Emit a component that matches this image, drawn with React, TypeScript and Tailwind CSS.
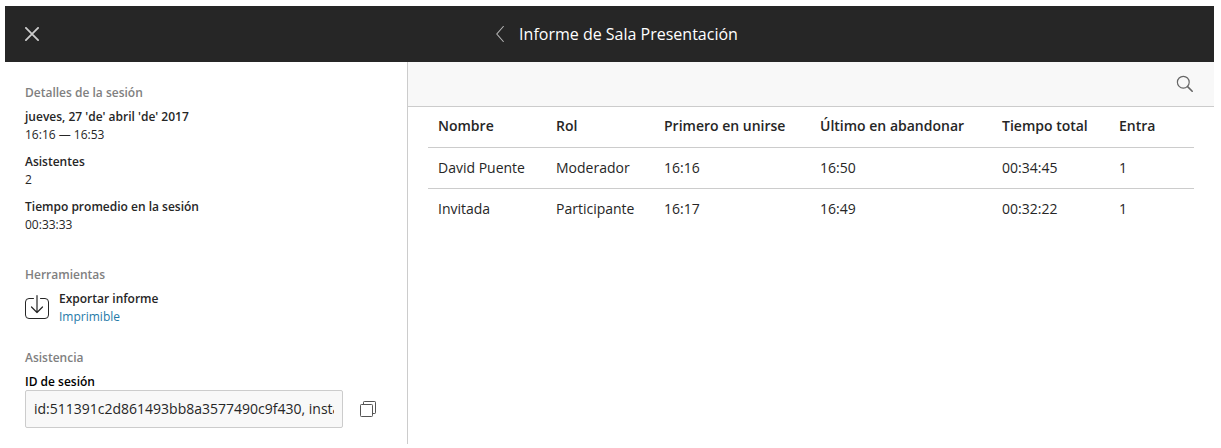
import type { ReactNode } from "react";

const details = [
  { label: "jueves, 27 'de' abril 'de' 2017", value: "16:16 — 16:53" },
  { label: "Asistentes", value: "2" },
  { label: "Tiempo promedio en la sesión", value: "00:33:33" },
];

const columns = [
  { title: "Nombre", width: "w-[118px]" },
  { title: "Rol", width: "w-[108px]" },
  { title: "Primero en unirse", width: "w-[156px]" },
  { title: "Último en abandonar", width: "w-[182px]" },
  { title: "Tiempo total", width: "w-[117px]" },
  { title: "Entra", width: "" },
];

const rows = [
  ["David Puente", "Moderador", "16:16", "16:50", "00:34:45", "1"],
  ["Invitada", "Participante", "16:17", "16:49", "00:32:22", "1"],
];

function Section({ title, children }: { title: string; children: ReactNode }) {
  return (
    <section>
      <h2 className="mb-1.5 font-semibold text-[#808080]">{title}</h2>
      {children}
    </section>
  );
}

function Header() {
  return (
    <header className="grid h-14 grid-cols-[1fr_auto_1fr] items-center bg-[#262626] px-5 text-white">
      <button type="button" aria-label="Cerrar" className="w-fit">
        <svg width="14" height="14" viewBox="0 0 14 14" fill="none" stroke="#cccccc" strokeWidth="1.8" strokeLinecap="round">
          <path d="M0.9 0.9 13.1 13.1M13.1 0.9 0.9 13.1" />
        </svg>
      </button>
      <div className="flex items-center gap-[15px] pl-[15px]">
        <button type="button" aria-label="Volver">
          <svg width="8" height="16" viewBox="0 0 8 16" fill="none" stroke="#b4b4b4" strokeWidth="1.1" strokeLinecap="round">
            <path d="M7.3 0.5 0.8 8l6.5 7.5" />
          </svg>
        </button>
        <h1 className="text-base">Informe de Sala Presentación</h1>
      </div>
    </header>
  );
}

function Sidebar() {
  return (
    <aside className="flex w-[403px] shrink-0 flex-col gap-[23px] border-r border-[#cccccc] px-5 pt-[22px] pb-4 text-xs leading-[18px]">
      <Section title="Detalles de la sesión">
        <dl>
          {details.map((item) => (
            <div key={item.label} className="mb-[9px]">
              <dt className="font-semibold">{item.label}</dt>
              <dd>{item.value}</dd>
            </div>
          ))}
        </dl>
      </Section>
      <Section title="Herramientas">
        <div className="flex items-center gap-2.5">
          <svg width="24" height="26" viewBox="0 0 24 26" fill="none" stroke="#262626" strokeLinecap="round" strokeLinejoin="round">
            <path d="M8.5 3.5H4A3.5 3.5 0 0 0 .5 7v13A3.5 3.5 0 0 0 4 23.5h16a3.5 3.5 0 0 0 3.5-3.5V7A3.5 3.5 0 0 0 20 3.500h-4.5" />
            <path d="M12 .6v17M6.500 12l5.500 5.500 5.500-5.500" strokeWidth="1.2" />
          </svg>
          <div>
            <p className="font-semibold">Exportar informe</p>
            <a href="#imprimible" className="block text-[#1f7aa8]">Imprimible</a>
          </div>
        </div>
      </Section>
      <Section title="Asistencia">
        <label htmlFor="session-id" className="block h-[17px] font-semibold text-black">
          ID de sesión
        </label>
        <div className="flex items-center gap-[17px] pr-[11px]">
          <input
            id="session-id"
            type="text"
            readOnly
            value="id:511391c2d861493bb8a3577490c9f430, instancia:1"
            className="h-[38px] min-w-0 flex-1 rounded-xs border border-[#cccccc] bg-[#f8f8f8] px-2 pb-0.5 text-sm"
          />
          <button type="button" aria-label="Copiar ID de sesión">
            <svg width="16" height="16" viewBox="0 0 16 16" fill="none" stroke="#555555">
              <rect x="0.5" y="3.5" width="12" height="12" rx="0.8" />
              <path d="M3.5 3.5V1.2a.7.7 0 0 1 .7-.7h10.6a.7.7 0 0 1 .7.7v10.6a.7.7 0 0 1-.7.7h-2.3" />
            </svg>
          </button>
        </div>
      </Section>
    </aside>
  );
}

function Report() {
  return (
    <main className="min-w-0 flex-1">
      <div className="flex h-[45px] items-center justify-end border-b border-[#cccccc] bg-[#f8f8f8] px-5">
        <button type="button" aria-label="Buscar">
          <svg width="18" height="18" viewBox="0 0 18 18" fill="none" stroke="#666666" strokeWidth="1.2" strokeLinecap="round">
            <circle cx="7.3" cy="7.2" r="5.9" />
            <path d="M11.6 11.600l4.600 4.600" strokeWidth="1.600" />
          </svg>
        </button>
      </div>
      <div className="px-5">
        <table className="w-full table-fixed text-left text-sm">
          <thead>
            <tr className="h-10 border-b border-[#cccccc]">
              {columns.map((column) => (
                <th key={column.title} scope="col" className={`${column.width} px-2.5 pb-0.5 font-semibold whitespace-nowrap`}>
                  {column.title}
                </th>
              ))}
            </tr>
          </thead>
          <tbody>
            {rows.map((row) => (
              <tr key={row[0]} className="h-[41px] border-b border-[#cccccc] last:border-b-0">
                {row.map((cell, index) => (
                  <td key={columns[index].title} className="px-2.5 whitespace-nowrap">
                    {cell}
                  </td>
                ))}
              </tr>
            ))}
          </tbody>
        </table>
      </div>
    </main>
  );
}

export default function App() {
  return (
    <div className="min-h-screen bg-white pt-1.5 pr-[7px] pb-1 pl-[5px] font-['Open_Sans','Noto_Sans',sans-serif] text-[#262626]">
      <Header />
      <div className="flex">
        <Sidebar />
        <Report />
      </div>
    </div>
  );
}
